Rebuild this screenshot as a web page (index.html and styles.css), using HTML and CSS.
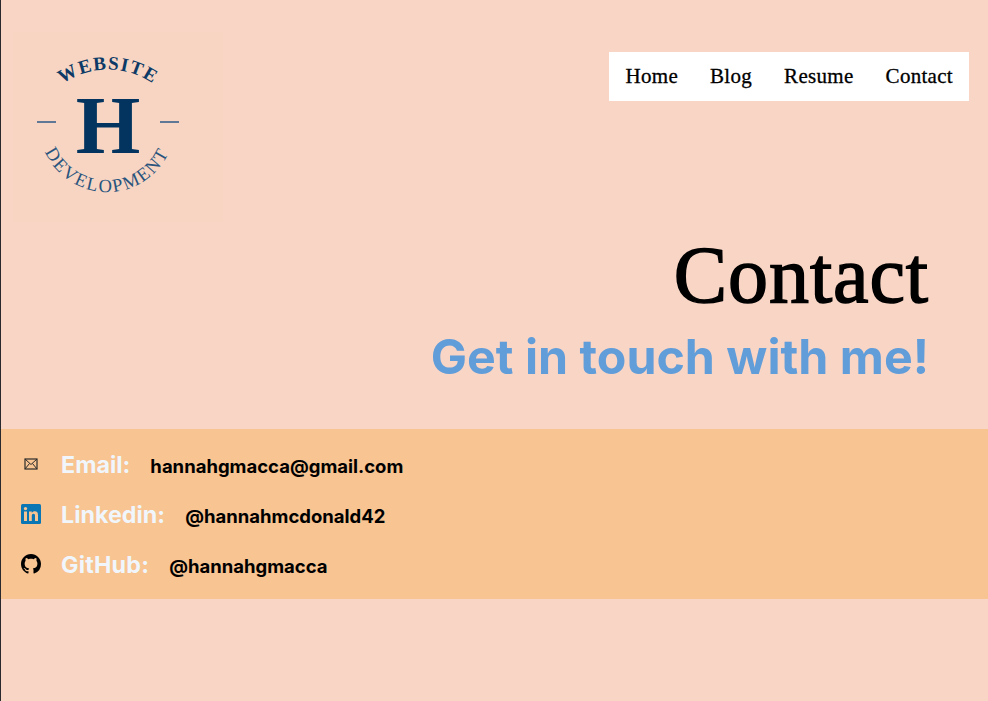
FILE: index.html
```html
<!DOCTYPE html>
<html lang="en">
<head>
<meta charset="utf-8">
<title>Contact</title>
<link rel="stylesheet" href="styles.css">
</head>
<body>
<div class="page">
  <header class="top">
    <svg class="logo" viewBox="0 0 210 190" aria-label="Website H Development logo">
      <defs>
        <path id="arcTop" d="M25 81 A 78 78 0 0 1 165 81"/>
        <path id="arcBottom" d="M30 115 A 68 68 0 0 0 158 115"/>
      </defs>
      <rect width="210" height="190" class="logo-bg"/>
      <text class="logo-small logo-bold"><textPath href="#arcTop" startOffset="50%" text-anchor="middle">WEBSITE</textPath></text>
      <text class="logo-small logo-thin"><textPath href="#arcBottom" startOffset="50%" text-anchor="middle">DEVELOPMENT</textPath></text>
      <text class="logo-h" x="95" y="121" text-anchor="middle">H</text>
      <path class="logo-rule" d="M24 90H43M147 90H166"/>
    </svg>
    <nav class="nav">
      <a href="#">Home</a><a href="#">Blog</a><a href="#">Resume</a><a href="#">Contact</a>
    </nav>
  </header>
  <section class="hero">
    <h1>Contact</h1>
    <h2>Get in touch with me!</h2>
  </section>
  <section class="band">
    <div class="row">
      <svg class="icon" viewBox="0 0 20 20"><rect x="4" y="5" width="12" height="10" fill="none" stroke="#2c2c2c" stroke-width="1.2"/><path d="M4 5l6 5.500L16 5M4 15l4.500-5.500M16 15l-4.500-5.500" fill="none" stroke="#2c2c2c" stroke-width="1"/></svg>
      <span class="label">Email:</span><span class="value">hannahgmacca@gmail.com</span>
    </div>
    <div class="row">
      <svg class="icon" viewBox="0 0 20 20"><rect width="20" height="20" rx="1.500" fill="#0a76b4"/><rect x="3" y="7.500" width="3" height="9.500" fill="#f8c491"/><circle cx="4.500" cy="4.600" r="1.700" fill="#f8c491"/><path d="M8 7.500h2.800v1.400c.6-1 1.700-1.600 3-1.600 2.400 0 3.200 1.500 3.200 3.900V17h-3v-5.200c0-1.300-.4-2-1.500-2-1.200 0-1.700.9-1.700 2.100V17H8z" fill="#f8c491"/></svg>
      <span class="label">Linkedin:</span><span class="value">@hannahmcdonald42</span>
    </div>
    <div class="row">
      <svg class="icon" viewBox="0 0 16 16"><path fill="#000" d="M8 0C3.580 0 0 3.580 0 8c0 3.540 2.290 6.530 5.470 7.590.4.070.55-.170.55-.380 0-.190-.010-.820-.010-1.490-2.010.370-2.530-.490-2.690-.940-.090-.230-.480-.940-.820-1.130-.280-.150-.680-.520-.010-.530.630-.010 1.080.580 1.230.820.720 1.210 1.870.870 2.330.660.070-.520.280-.870.510-1.070-1.780-.200-3.640-.890-3.640-3.950 0-.870.310-1.590.820-2.150-.080-.200-.360-1.020.080-2.120 0 0 .670-.210 2.200.820.640-.180 1.320-.270 2-.270s1.360.090 2 .270c1.530-1.040 2.200-.820 2.200-.820.440 1.100.160 1.920.080 2.120.510.560.820 1.270.820 2.150 0 3.070-1.870 3.750-3.650 3.950.290.250.540.730.540 1.480 0 1.070-.010 1.930-.010 2.200 0 .210.150.460.550.380A8.010 8.010 0 0 0 16 8c0-4.420-3.580-8-8-8z"/></svg>
      <span class="label label-git">GitHub:</span><span class="value">@hannahgmacca</span>
    </div>
  </section>
</div>
</body>
</html>
```
FILE: styles.css
```css
* { box-sizing: border-box; }
html, body { margin: 0; height: 100%; }
body { background: #f9d5c6; overflow: hidden; }
.page {
  height: 701px;
  border-left: 1px solid #2a2a2e;
  background: #f9d5c6;
}
.top {
  height: 221px;
  display: flex;
  justify-content: space-between;
  align-items: flex-start;
  padding: 32px 19px 0 12px;
}
.logo { width: 210px; height: 190px; display: block; }
.logo-bg { fill: #f8d5c2; }
.logo-small { font-family: "Liberation Serif", serif; fill: #0d3a66; }
.logo-bold { font-size: 19px; font-weight: 700; letter-spacing: 1.400px; }
.logo-thin { font-size: 18.500px; letter-spacing: 1.800px; fill: #28547e; }
.logo-h { font-family: "Liberation Serif", serif; font-weight: 700; font-size: 83px; fill: #03345f; }
.logo-rule { stroke: #2b5a86; stroke-width: 1.500; fill: none; }
.nav {
  margin-top: 20px;
  height: 49px;
  background: #fff;
  display: flex;
  align-items: center;
  gap: 32px;
  padding: 0 16px 0 17px;
  font-family: "Liberation Serif", serif;
  font-size: 21px;
}
.nav a { color: #000; text-decoration: none; letter-spacing: .3px; -webkit-text-stroke: .3px #000; }
.hero {
  height: 208px;
  text-align: right;
  padding-right: 59px;
}
h1 {
  margin: 0;
  padding-top: 8px;
  font-family: "Liberation Serif", serif;
  font-weight: 400;
  font-size: 80px;
  line-height: 92px;
  letter-spacing: .9px;
  -webkit-text-stroke: 1.500px #000;
  color: #000;
}
h2 {
  margin: 0;
  padding-top: 5px;
  font-family: Inter, sans-serif;
  font-weight: 700;
  font-size: 48.300px;
  line-height: 62px;
  color: #619dd9;
}
.band {
  height: 170px;
  background: #f8c491;
  padding: 11px 0 0 20px;
  font-family: Inter, sans-serif;
  font-weight: 700;
}
.row { height: 50px; display: flex; align-items: center; }
.icon { width: 20px; height: 20px; flex: none; margin: -2px 20px 0 0; }
.label { font-size: 23.300px; color: #f0f6fb; margin: -2px 20px 0 0; }
.label-git { letter-spacing: .2px; }
.value { font-size: 18.500px; color: #000; margin-top: 1px; }
```
